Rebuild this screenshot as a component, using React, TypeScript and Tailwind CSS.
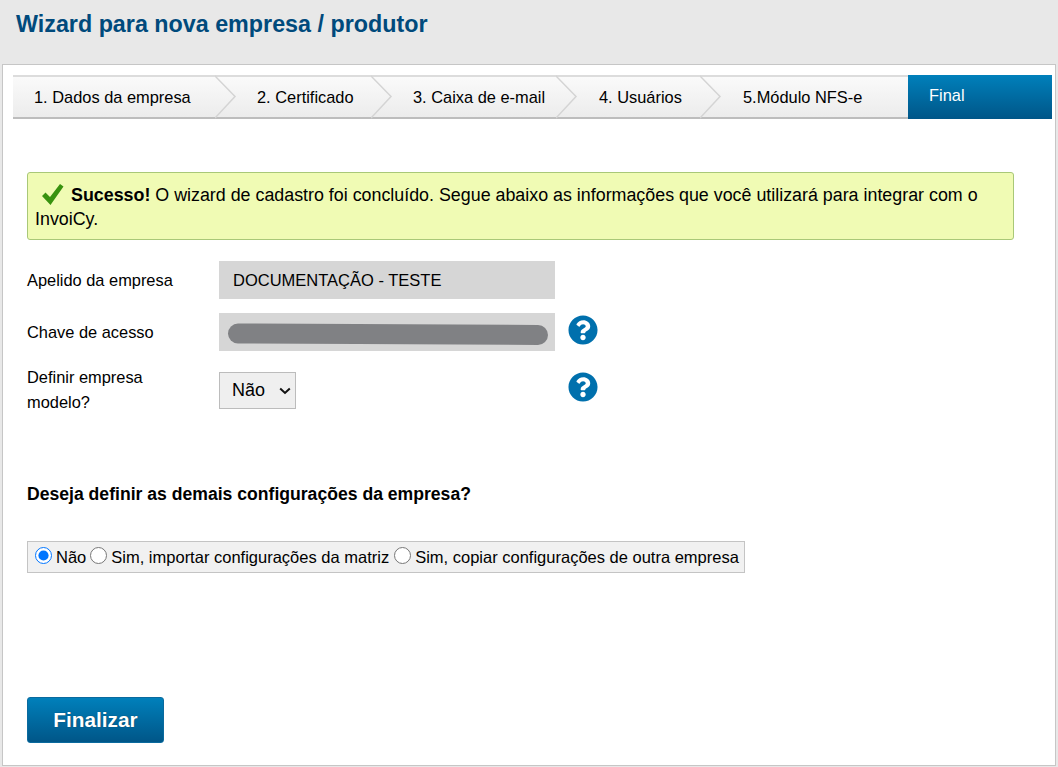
import React from 'react';
import { FaQuestionCircle } from 'react-icons/fa';

const steps = [
    { label: '1. Dados da empresa', width: 'w-[203px]', pad: 'pl-[21px]' },
    { label: '2. Certificado', width: 'w-[156px]', pad: 'pl-[41px]' },
    { label: '3. Caixa de e-mail', width: 'w-[185px]', pad: 'pl-[41px]' },
    { label: '4. Usuários', width: 'w-[144px]', pad: 'pl-[42px]' },
    { label: '5.Módulo NFS-e', width: 'w-[207px]', pad: 'pl-[42px]' },
];

const Chevron = () => (
    <svg className="absolute -top-[2px] left-full z-10 -ml-px" width="22" height="44" viewBox="0 0 22 44">
        <path d="M0 1 L20 21.5 L0 43" fill="none" stroke="#d4d4d4" strokeWidth="1.5" />
    </svg>
);

const App: React.FC = () => {
    return (
        <div className="h-[767px] bg-[#e8e8e8] px-[2px] pb-px flex flex-col font-['Liberation_Sans',Arial,sans-serif] text-black overflow-hidden">
            <div className="h-[64px] pl-[14px] pt-[10px] shrink-0">
                <h1 className="text-[23.3px] leading-[28px] font-bold text-[#004a7c]">Wizard para nova empresa / produtor</h1>
            </div>

            <div className="flex-1 bg-white border border-[#c6c6c6] pl-[10px] pr-[3px] pt-[10px]">
                {/* Passos do wizard */}
                <div className="flex h-[44px] text-[16.4px]">
                    {steps.map((step, i) => (
                        <div
                            key={step.label}
                            className={`relative ${step.width} ${step.pad} pt-px flex items-center bg-gradient-to-b from-[#fafafa] to-[#ececec] border-t-2 border-b-2 border-t-[#dcdcdc] border-b-[#bdbdbd]`}
                        >
                            {step.label}
                            {i < steps.length - 1 && <Chevron />}
                        </div>
                    ))}
                    <div className="w-[144px] pl-[21px] pt-[11px] leading-[18px] bg-gradient-to-b from-[#0080bb] to-[#005688] text-white">Final</div>
                </div>

                <div className="pl-[14px] pr-[38px]">
                    {/* Mensagem de sucesso */}
                    <div className="mt-[53px] h-[68px] bg-[#f0fbb4] border border-[#a9c878] rounded-[3px] pl-[7px] pr-[10px] pt-[10px] text-[17.85px] leading-[24px]">
                        <svg className="inline-block ml-[6px] mr-[7px] -mt-[4px] align-middle" width="23" height="23" viewBox="0 0 23 23">
                            <path d="M1 13 L4.5 9.5 L9 14 L19 1 L22.5 3.5 L9.5 22 Z" fill="#38920f" />
                        </svg>
                        <b>Sucesso!</b> O wizard de cadastro foi concluído. Segue abaixo as informações que você utilizará para integrar com o InvoiCy.
                    </div>

                    {/* Campos */}
                    <div className="mt-[21px] flex h-[38px] items-center text-[16.4px]">
                        <label className="w-[192px] pt-px">Apelido da empresa</label>
                        <div className="w-[336px] h-[38px] bg-[#d6d6d6] pl-[14px] pt-px flex items-center text-[16.5px]">DOCUMENTAÇÃO - TESTE</div>
                    </div>

                    <div className="mt-[14px] flex h-[38px] items-center text-[16.4px]">
                        <label className="w-[192px] pt-px">Chave de acesso</label>
                        <div className="w-[336px] h-[38px] bg-[#d6d6d6]">
                            <svg width="336" height="38" viewBox="0 0 336 38">
                                <line x1="19" y1="20.5" x2="319" y2="22" stroke="#808184" strokeWidth="20" strokeLinecap="round" />
                            </svg>
                        </div>
                        <FaQuestionCircle className="ml-[13px] -mt-[4px] text-[#0070ad]" size={30} />
                    </div>

                    <div className="mt-[10px] flex text-[16.4px]">
                        <label className="w-[192px] leading-[25px] pr-[40px] pt-[4px]">Definir empresa modelo?</label>
                        <div className="w-[336px] pt-[11px]">
                            <div className="relative w-[77px] h-[37px]">
                                <select className="appearance-none h-[37px] w-[77px] bg-[#efefef] border border-[#bcbcbc] pl-[12px] text-[18px]" defaultValue="Não">
                                    <option>Não</option>
                                    <option>Sim</option>
                                </select>
                                <svg className="absolute right-[5px] top-[15px] pointer-events-none" width="12" height="8" viewBox="0 0 12 8">
                                    <path d="M1.2 1.5 L6 6 L10.8 1.5" fill="none" stroke="#111" strokeWidth="2" />
                                </svg>
                            </div>
                        </div>
                        <FaQuestionCircle className="ml-[13px] mt-[11px] text-[#0070ad]" size={30} />
                    </div>

                    <p className="mt-[69px] text-[17.6px] leading-[20px] font-bold">Deseja definir as demais configurações da empresa?</p>

                    {/* Opções */}
                    <div className="mt-[37px] w-[718px] h-[32px] bg-[#f1f1f1] border border-[#c4c4c4] flex items-center pl-[7px] text-[16.5px] whitespace-nowrap">
                        <input type="radio" name="config" defaultChecked className="w-[17px] h-[17px] -mt-[4px] mr-[4px]" />
                        <span className="pt-px">Não</span>
                        <input type="radio" name="config" className="w-[17px] h-[17px] -mt-[4px] ml-[4px] mr-[4px]" />
                        <span className="pt-px">Sim, importar configurações da matriz</span>
                        <input type="radio" name="config" className="w-[17px] h-[17px] -mt-[4px] ml-[5px] mr-[4px]" />
                        <span className="pt-px">Sim, copiar configurações de outra empresa</span>
                    </div>

                    <button className="mt-[124px] w-[137px] h-[46px] rounded-[3px] border border-[#0a6a9e] bg-gradient-to-b from-[#0080bb] to-[#005688] text-white font-bold text-[20.8px] [text-shadow:0_0_1px_#00344f]">
                        Finalizar
                    </button>
                </div>
            </div>
        </div>
    );
};

export default App;
